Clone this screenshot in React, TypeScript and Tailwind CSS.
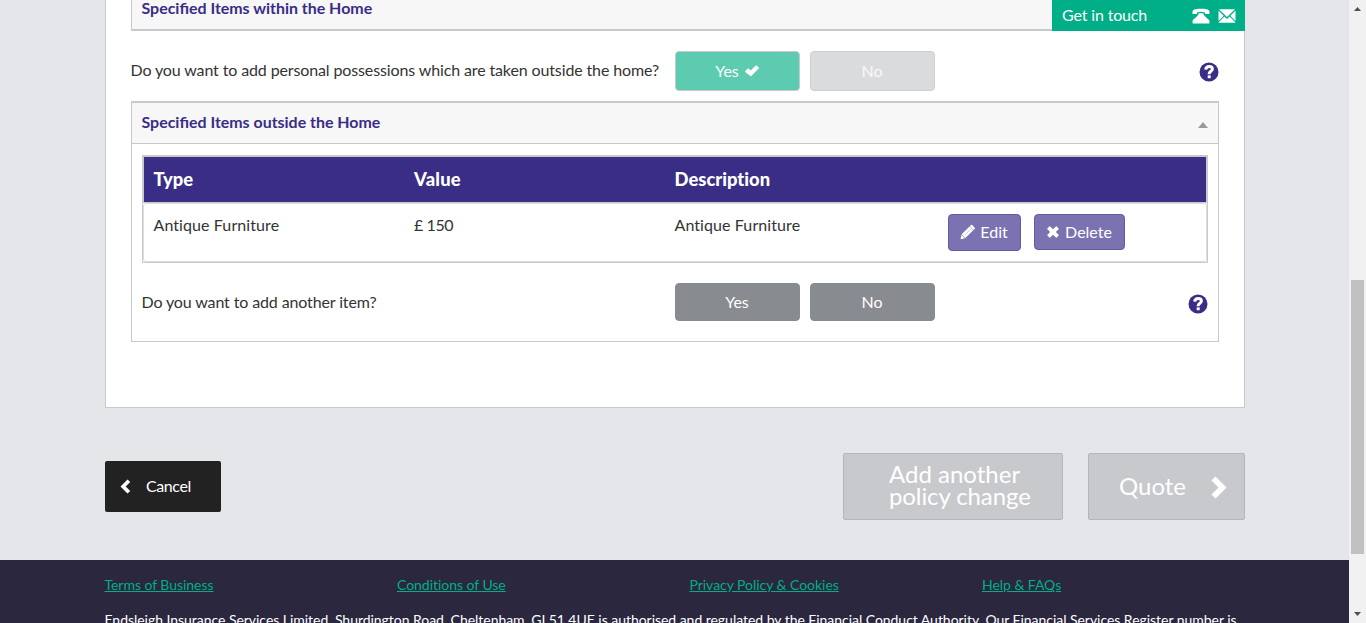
import React from 'react';

const CheckIcon = () => (
  <svg viewBox="0 0 14 12" className="ml-1.5 h-3 w-3.5 shrink-0" fill="currentColor">
    <path d="M.3 6 2.400 3.700Q2.900 3.200 3.400 3.600L5.700 5.500 10.700.6Q11.200.2 11.700.6L13.700 2.600Q14.100 3.100 13.700 3.600L6.300 11.100Q5.800 11.600 5.300 11.100L.3 7Q-.1 6.500.3 6Z" />
  </svg>
);

const PencilIcon = () => (
  <svg viewBox="0 0 16 16" className="mr-[4px] size-4 shrink-0" fill="currentColor">
    <path d="M10.900 1.100Q11.500.6 12.100 1.100L14.700 3.700Q15.200 4.300 14.700 4.900L13.500 6 9.800 2.300ZM9.500 2.600 13.200 6.300 5.400 14 1.700 10.300ZM1.500 10.800 5 14.300.5 15.300Z" />
    <path d="M4.800 10.900 10.200 5.500" stroke="#7b73b1" strokeWidth=".4" />
  </svg>
);

const CrossIcon = () => (
  <svg viewBox="0 0 12 12" className="mr-[6px] size-3 shrink-0" fill="currentColor">
    <path d="M.3 2.6 2.3.5Q2.7.1 3.1.5L6 3.3 8.9.5Q9.3.1 9.7.5L11.6 2.4Q12 2.8 11.6 3.2L8.8 6 11.6 8.8Q12 9.2 11.6 9.6L9.7 11.5Q9.3 11.9 8.9 11.5L6 8.7 3.1 11.5Q2.7 11.9 2.3 11.5L.4 9.6Q0 9.2.4 8.8L3.2 6 .4 3.2Q0 2.8.3 2.6Z" />
  </svg>
);

const HelpIcon = () => (
  <svg viewBox="0 0 20 20" className="size-5 shrink-0">
    <circle cx="10" cy="10" r="9.5" fill="#392d86" />
    <path d="M6.7 7.700C6.900 5 8.400 4.500 10.200 4.500C12.300 4.500 13.400 5.400 13.400 7C13.400 9.200 10.200 9.200 10.200 11.600V12.300" fill="none" stroke="#fff" strokeWidth="3" />
    <rect x="8.700" y="13.400" width="3" height="2.800" fill="#fff" />
  </svg>
);

const PhoneIcon = () => (
  <svg viewBox="0 0 18 16" className="h-4 w-[18px] shrink-0" fill="currentColor">
    <path d="M.5 5.5V3.6C1 1.2 5 .8 9 .8S17 1.2 17.5 3.6V5.5Q17.5 6 17 6H13.4Q13 6 13 5.6V4.4Q11 3.7 9 3.7T5 4.4V5.6Q5 6 4.600 6H1Q.5 6 .5 5.5Z" />
    <path d="M6.500 5.200H11.500V6.600Q13 8.600 17.400 12.300V15.500H.6V12.300Q5 8.600 6.500 6.600Z" />
  </svg>
);

const EnvelopeIcon = () => (
  <svg viewBox="0 0 18 16" className="h-4 w-[18px] shrink-0" fill="currentColor">
    <path d="M1 1.200H17L9 9ZM.5 2.500 5.700 7.700.5 12.900ZM17.500 2.500V12.900L12.300 7.700ZM6.400 8.400 9 11 11.600 8.400 17.300 14.200V14.800H.7V14.200Z" />
  </svg>
);

const Answer = ({ label, look, ticked }: { label: string; look: string; ticked?: boolean }) => (
  <button className={`flex w-[125px] items-center justify-center rounded-[4px] border pr-px text-white ${look}`}>
    {label}
    {ticked && <CheckIcon />}
  </button>
);

const footerLinks = ['Terms of Business', 'Conditions of Use', 'Privacy Policy & Cookies', 'Help & FAQs'];

export default function App() {
  return (
    <div className="relative flex h-[623px] w-[1366px] overflow-hidden bg-[#e5e6ea] font-['Lato',sans-serif] text-[16px] leading-[22px] text-[#333]">
      <div className="flex w-[1349px] flex-col">
        <main className="ml-[105px] h-[408px] w-[1140px] border-x border-b border-[#c8c9cd] bg-white px-[25px]">
          <div className="flex h-[31px] items-start border-b-2 border-l border-[#c8c9cd] bg-[#f7f7f7] pl-[9.500px] text-[15.950px] font-bold text-[#392d86]">
            <h2 className="-mt-[3px]">Specified Items within the Home</h2>
          </div>

          <div className="flex h-[70px] items-start pt-5">
            <p className="mt-[8px] -ml-[0.500px] w-[544.500px] tracking-[-0.125px]">Do you want to add personal possessions which are taken outside the home?</p>
            <div className="flex h-10 gap-2.5">
              <Answer label="Yes" ticked look="border-[#c8c9cd] bg-[#5ccbb0]" />
              <Answer label="No" look="border-[#cdced1] bg-[#dadbdd] text-white/80" />
            </div>
            <div className="mt-[11px] ml-auto"><HelpIcon /></div>
          </div>

          <section className="h-[241px] w-[1088px] border-x border-b border-[#c8c9cd]">
            <div className="flex h-[43px] items-center border-y border-t-2 border-[#c8c9cd] bg-[#f7f7f7] pr-2.5 pl-[9.500px]">
              <h2 className="-mt-0.5 text-[15.950px] font-bold text-[#392d86]">Specified Items outside the Home</h2>
              <svg viewBox="0 0 10 6" className="mt-1 ml-auto h-1.5 w-2.5" fill="#999"><path d="M0 6 5 0 10 6Z" /></svg>
            </div>

            <div className="mt-[11px] ml-2.5 h-[108px] w-[1066px] border border-[#c8c9cd]">
              <div className="grid h-[47px] grid-cols-[260.500px_260.500px_1fr] items-center border border-[#c8c9cd] bg-[#392d86] pb-0.5 pl-[9.500px] text-[18.400px] font-black text-white [font-variant-ligatures:none]">
                <span>Type</span>
                <span className="tracking-[0.2px]">Value</span>
                <span>Description</span>
              </div>
              <div className="grid h-[59px] grid-cols-[260.500px_260.500px_273.500px_1fr] items-start rounded-[3px] border border-[#dcdcdf] pl-[9.500px] [font-variant-ligatures:none]">
                <span className="mt-[10px] tracking-[0.090px]">Antique Furniture</span>
                <span className="mt-[10px] tracking-[-0.4px]">£ 150</span>
                <span className="mt-[10px] tracking-[0.090px]">Antique Furniture</span>
                <div className="mt-[10px] flex items-start gap-[13px] text-white">
                  <button className="flex h-[37px] w-[73px] items-center justify-center rounded-[4px] border border-[#655aa5] bg-[#7b73b1] pr-px pb-px">
                    <PencilIcon />Edit
                  </button>
                  <button className="flex h-[36px] w-[91px] items-center justify-center rounded-[4px] border border-[#655aa5] bg-[#7b73b1]">
                    <CrossIcon />Delete
                  </button>
                </div>
              </div>
            </div>

            <div className="flex items-start pt-5 pr-2.5 pl-[9.500px]">
              <p className="mt-[8px] w-[533.500px] tracking-[-0.125px]">Do you want to add another item?</p>
              <div className="flex h-[38px] gap-2.5">
                <Answer label="Yes" look="border-[#888b8f] bg-[#888b8f]" />
                <Answer label="No" look="border-[#888b8f] bg-[#888b8f]" />
              </div>
              <div className="mt-[11px] ml-auto"><HelpIcon /></div>
            </div>
          </section>
        </main>

        <div className="ml-[105px] flex h-[152px] w-[1140px] items-start pt-[45px] text-white">
          <button className="mt-2 flex h-[51px] w-[116px] items-center rounded-[2px] bg-[#222] pl-[15px]">
            <svg viewBox="0 0 11 15" className="h-[15px] w-[11px]" fill="currentColor"><path d="M7.500.5 10.200 3 5.700 7.500 10.200 12 7.500 14.500.5 7.500Z" /></svg>
            <span className="-mt-0.5 ml-[15px] tracking-[-0.4px]">Cancel</span>
          </button>
          <button className="mr-[25px] ml-auto flex h-[67px] w-[220px] flex-col items-start justify-center rounded-[2px] border border-[#b4b5b9] bg-[#c8c9cd] pb-1 pl-[45px] text-left text-[24px] leading-[22px]">
            <span>Add another</span>
            <span className="tracking-[-0.1px]">policy change</span>
          </button>
          <button className="flex h-[67px] w-[157px] items-center rounded-[2px] border border-[#b4b5b9] bg-[#c8c9cd] pl-[30px] text-[24px]">
            <span className="-mt-px">Quote</span>
            <svg viewBox="0 0 16 23" className="mt-0.5 ml-auto mr-[17px] h-[23px] w-4" fill="currentColor"><path d="M4.500.5 15.500 11.500 4.500 22.500.5 18.500 7.500 11.500.5 4.500Z" /></svg>
          </button>
        </div>

        <footer className="flex h-[63px] flex-col bg-[#2a273f] pl-[104.500px] text-[14px] leading-5 text-white [font-variant-ligatures:none]">
          <nav className="mt-[15px] grid grid-cols-[292.500px_292.500px_292.500px_1fr] tracking-[-0.04px] text-[#00ae87]">
            {footerLinks.map((link) => (
              <a key={link} href="#" className="justify-self-start underline">{link}</a>
            ))}
          </nav>
          <p className="mt-[15px] tracking-[-0.035px] whitespace-nowrap">
            Endsleigh Insurance Services Limited, Shurdington Road, Cheltenham, GL51 4UE is authorised and regulated by the Financial Conduct Authority. Our Financial Services Register number is
          </p>
        </footer>
      </div>

      <aside className="flex w-[17px] flex-col items-center bg-[#f1f1f1]">
        <svg viewBox="0 0 7 4" className="mt-[7px] h-1 w-[7px]" fill="#505050"><path d="M0 4 3.500 0 7 4Z" /></svg>
        <div className="mt-[269px] h-[274px] w-[13px] bg-[#c1c1c1]" />
        <svg viewBox="0 0 7 4" className="mt-[58px] h-1 w-[7px]" fill="#505050"><path d="M0 0H7L3.500 4Z" /></svg>
      </aside>

      <div className="absolute top-0 left-[1052px] flex h-[31px] w-[193px] items-center bg-[#00ae87] pl-2.5 text-white">
        <span className="-mt-0.5 mr-auto tracking-[-0.15px]">Get in touch</span>
        <PhoneIcon />
        <div className="mr-[9px] ml-2 flex"><EnvelopeIcon /></div>
      </div>
    </div>
  );
}
